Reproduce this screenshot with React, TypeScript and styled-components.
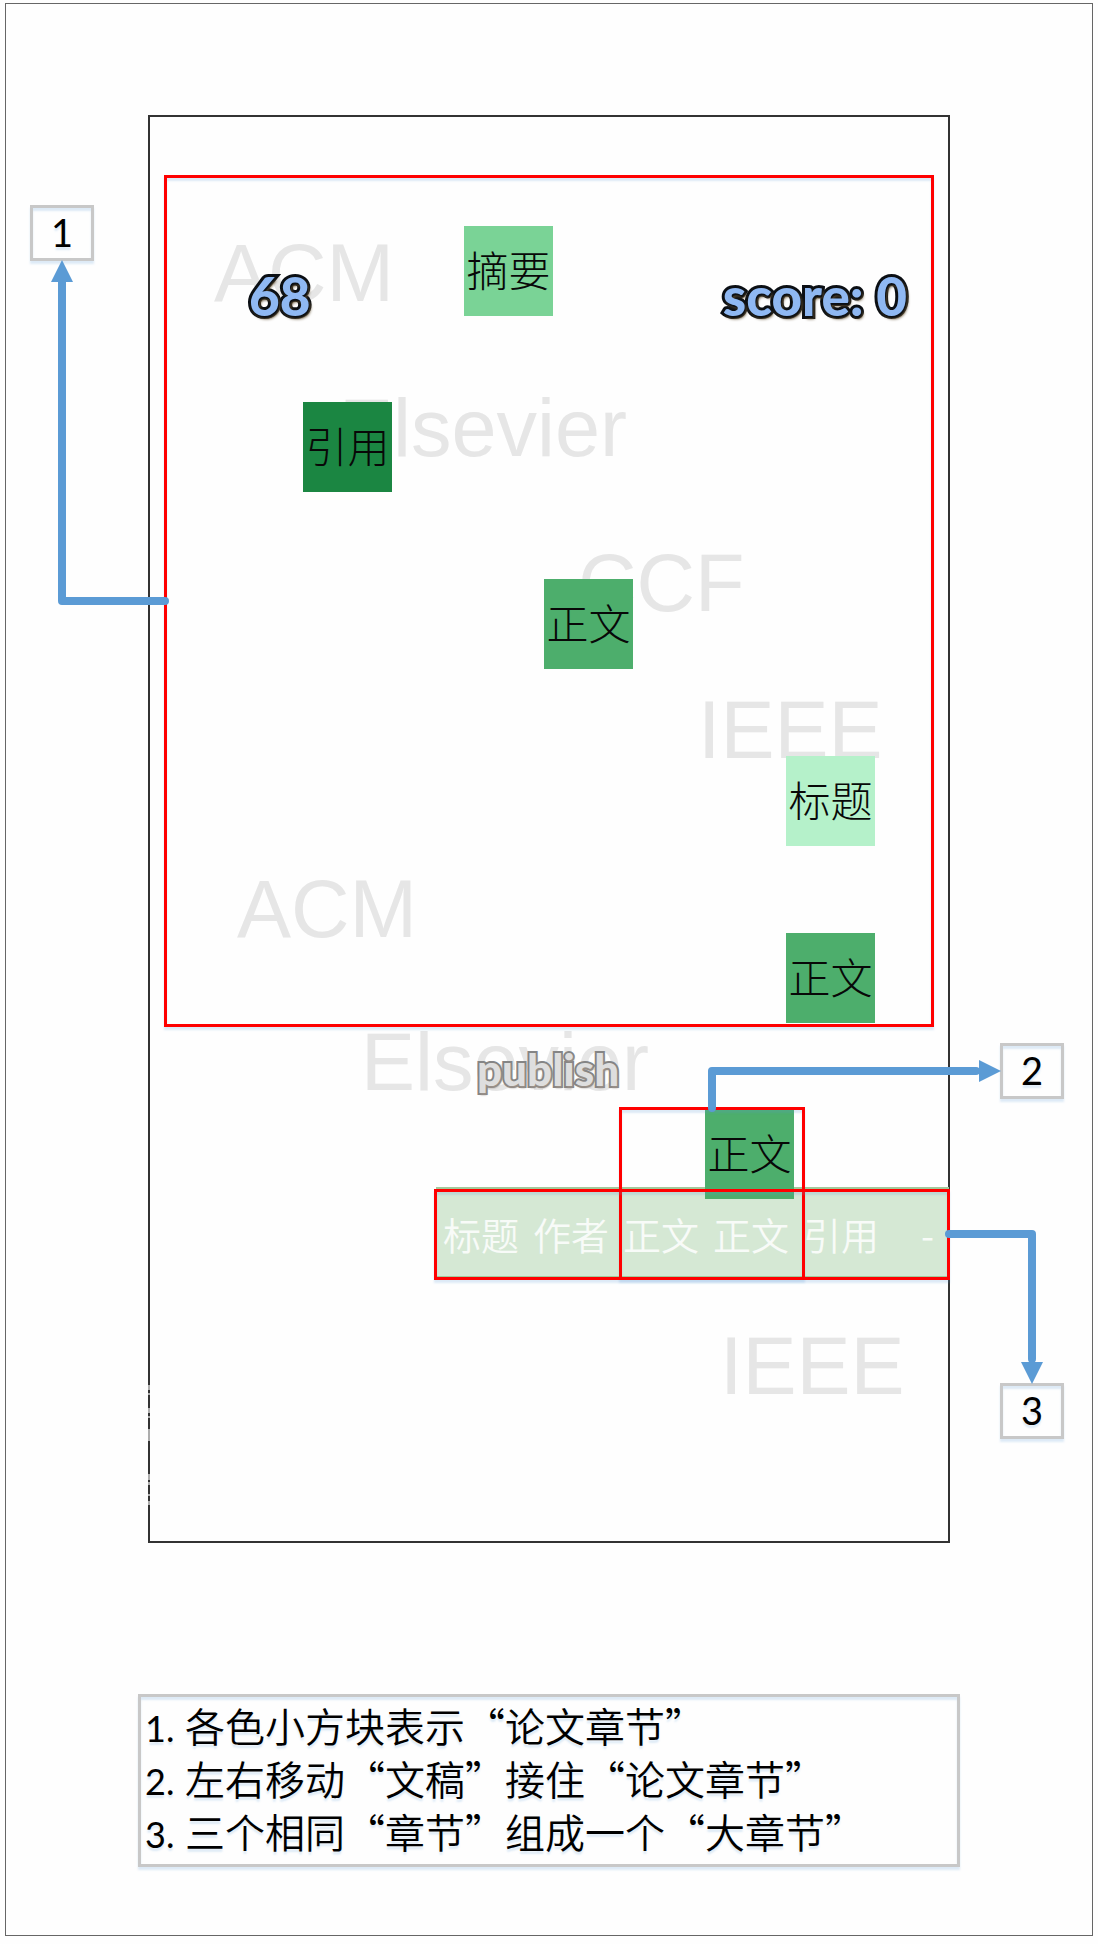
import React from "react";
import styled, { createGlobalStyle } from "styled-components";

const cjk = '"Noto Sans CJK SC", sans-serif';
const numerals = 'Lato, "Noto Sans CJK SC", sans-serif';
const glow = "rgba(91, 155, 213, 0.2)";

const GlobalStyle = createGlobalStyle`
  *, *::before, *::after { box-sizing: border-box; }
  body { margin: 0; background: #fefefe; color: #000; font-family: ${cjk}; }
`;

const Sheet = styled.main`
  display: flex;
  flex-direction: column;
  align-items: center;
  gap: 151px;
  margin: 3px 5px 8px;
  padding: 111px 0 68px;
  border: 1px solid #666;
`;

const Phone = styled.section`
  position: relative;
  display: flex;
  flex-direction: column;
  width: 802px;
  height: 1428px;
  padding-top: 58px;
  border: 2px solid #333;
`;

const Watermark = styled.span<{ $x: number; $y: number }>`
  position: absolute;
  left: ${(p) => p.$x}px;
  top: ${(p) => p.$y}px;
  color: #e6e6e6;
  font: 81px/81px "Liberation Sans", Arial, sans-serif;
`;

const Tile = styled.div<{ $x: number; $y: number; $color: string }>`
  position: absolute;
  left: ${(p) => p.$x}px;
  top: ${(p) => p.$y}px;
  display: flex;
  align-items: center;
  justify-content: center;
  width: 89px;
  height: 90px;
  padding-bottom: 4px;
  background: ${(p) => p.$color};
  color: #080808;
  font-size: 42px;
  font-weight: 300;
  line-height: 48px;
  white-space: nowrap;
`;

const PlayArea = styled.div`
  position: relative;
  z-index: 1;
  display: flex;
  align-items: flex-start;
  justify-content: space-between;
  height: 852px;
  margin: 0 14px;
  padding: 91px 24px 0 82px;
  border: 3px solid #f00;
  box-shadow: 0 3px 2px ${glow}, inset 0 3px 2px ${glow};
`;

const GameText = styled.span<{ $muted?: boolean }>`
  color: ${(p) => (p.$muted ? "#dedede" : "#8fb8f2")};
  font: 900 ${(p) => (p.$muted ? 44 : 53)}px/54px Lato, sans-serif;
  -webkit-text-stroke: ${(p) => (p.$muted ? "4px #858585" : "6px #0b0f14")};
  paint-order: stroke fill;
  stroke-linejoin: round;
  text-shadow: ${(p) =>
    p.$muted ? "1px 2px 2px #9a9088" : "1px 2px 1px #0b0f14, 2px 3px 3px #5c4a2c"};
`;

const PublishButton = styled.button`
  position: relative;
  z-index: 1;
  align-self: flex-start;
  height: 54px;
  margin: 15px 0 91px 327px;
  padding: 0;
  border: 0;
  background: none;
`;

const Draft = styled.div`
  display: flex;
  align-items: center;
  height: 91px;
  margin: 0 -1px 0 286px;
  padding: 2px 0 0 6px;
  border: 2px solid #a3c99a;
  border-width: 2px 1px;
  background: #d5e8d4;
`;

const DraftCell = styled.span`
  flex: 0 0 90px;
  color: #f8fbf8;
  font-size: 38px;
  font-weight: 350;
  line-height: 48px;
  white-space: nowrap;

  &:last-child {
    flex: 1;
    padding-left: 28px;
  }
`;

const Region = styled.div<{ $left: number; $right: number; $top: number; $height: number }>`
  position: absolute;
  left: ${(p) => p.$left}px;
  right: ${(p) => p.$right}px;
  top: ${(p) => p.$top}px;
  height: ${(p) => p.$height}px;
  border: 3px solid #f00;
  box-shadow: 0 3px 2px ${glow}, inset 0 3px 2px ${glow};
`;

const Callout = styled.div<{ $x: number; $y: number }>`
  position: absolute;
  left: ${(p) => p.$x}px;
  top: ${(p) => p.$y}px;
  display: flex;
  align-items: center;
  justify-content: center;
  width: 64px;
  height: 56px;
  padding-bottom: 2px;
  border: 3px solid #c8c8c8;
  box-shadow: 0 3px 2px ${glow}, inset 0 3px 2px ${glow};
  font: 38px/48px ${numerals};
  text-shadow: 0 3px 2px ${glow};
`;

const Connectors = styled.svg`
  position: absolute;
  inset: 0;
  z-index: 2;
  width: 798px;
  height: 1424px;
  overflow: visible;
  pointer-events: none;
`;

const Legend = styled.ol`
  width: 822px;
  max-width: 100%;
  margin: 0;
  padding: 2px 4px 6px;
  border: 3px solid #c8c8c8;
  box-shadow: 0 3px 2px ${glow}, inset 0 3px 2px ${glow};
  list-style: none;
  text-shadow: 0 3px 2px ${glow};
`;

const LegendItem = styled.li`
  display: flex;
  align-items: baseline;
  height: 53px;
  font-size: 40px;
  font-weight: 350;
  line-height: 53px;
`;

const LegendNumber = styled.span`
  flex: 0 0 40px;
  font-family: ${numerals};
  font-size: 36px;
  font-weight: 400;
`;

const watermarks = [
  { text: "ACM", x: 64, y: 116 },
  { text: "Elsevier", x: 189, y: 271 },
  { text: "CCF", x: 428, y: 426 },
  { text: "IEEE", x: 548, y: 573 },
  { text: "ACM", x: 87, y: 752 },
  { text: "Elsevier", x: 211, y: 905 },
  { text: "IEEE", x: 570, y: 1209 },
];

const tiles = [
  { text: "摘要", x: 314, y: 109, color: "#7ad396" },
  { text: "引用", x: 153, y: 285, color: "#1b8642" },
  { text: "正文", x: 394, y: 462, color: "#4dae6c" },
  { text: "标题", x: 636, y: 639, color: "#b5f1ca" },
  { text: "正文", x: 636, y: 816, color: "#4dae6c" },
  { text: "正文", x: 555, y: 992, color: "#4dae6c" },
];

const draftWords = ["标题", "作者", "正文", "正文", "引用", "-"];

const callouts = [
  { text: "1", x: -120, y: 88 },
  { text: "2", x: 850, y: 926 },
  { text: "3", x: 850, y: 1266 },
];

const legend = [
  "各色小方块表示“论文章节”",
  "左右移动“文稿”接住“论文章节”",
  "三个相同“章节”组成一个“大章节”",
];

export default function App() {
  return (
    <>
      <GlobalStyle />
      <Sheet lang="zh-CN">
        <Phone>
          {watermarks.map((w, i) => (
            <Watermark key={i} $x={w.x} $y={w.y}>{w.text}</Watermark>
          ))}
          <PlayArea>
            <GameText>68</GameText>
            <GameText>score: 0</GameText>
          </PlayArea>
          <PublishButton type="button">
            <GameText $muted>publish</GameText>
          </PublishButton>
          <Draft>
            {draftWords.map((word, i) => (
              <DraftCell key={i}>{word}</DraftCell>
            ))}
          </Draft>
          {tiles.map((t, i) => (
            <Tile key={i} $x={t.x} $y={t.y} $color={t.color}>{t.text}</Tile>
          ))}
          <Region $left={469} $right={143} $top={990} $height={173} />
          <Region $left={284} $right={-2} $top={1072} $height={91} />
          {callouts.map((c) => (
            <Callout key={c.text} $x={c.x} $y={c.y}>{c.text}</Callout>
          ))}
          <Connectors viewBox="0 0 798 1424" aria-hidden="true">
            <g fill="none" stroke="#5b9bd5" strokeWidth="8" strokeLinecap="round" strokeLinejoin="round">
              <path d="M15 484H-88V162" />
              <path d="M562 991V954H826" />
              <path d="M799 1117H882V1242" />
            </g>
            <g fill="#5b9bd5">
              <path d="M-88 143l11 22h-22z" />
              <path d="M851 954l-22-11v22z" />
              <path d="M882 1267l-11-22h22z" />
            </g>
            <path
              d="M-1 1268v5m0 3v2m0 13v5m0 3v2m0 11v12m0 33v6m0 2v3m0 9v2m0 5v4"
              stroke="#fff"
              strokeWidth="2"
              opacity="0.6"
            />
          </Connectors>
        </Phone>
        <Legend>
          {legend.map((line, i) => (
            <LegendItem key={line}>
              <LegendNumber>{i + 1}.</LegendNumber>
              {line}
            </LegendItem>
          ))}
        </Legend>
      </Sheet>
    </>
  );
}
